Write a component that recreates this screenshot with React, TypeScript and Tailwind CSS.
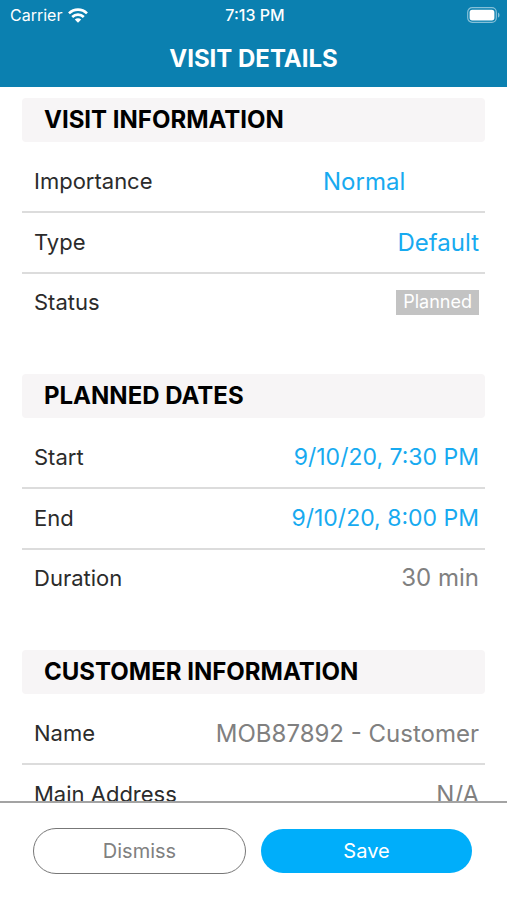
import { useState } from 'react';
import type { ReactNode } from 'react';

interface SectionProps {
  title: string;
  children: ReactNode;
}

interface RowProps {
  label: string;
  htmlFor?: string;
  last?: boolean;
  children: ReactNode;
}

function WifiIcon() {
  return (
    <svg width="20" height="15" viewBox="0 0 20 15" fill="none" stroke="white" strokeWidth="2.6" aria-hidden="true">
      <path d="M1 5.4C6 .4 14 .4 19 5.4" />
      <path d="M4.2 9C7.4 5.8 12.6 5.8 15.8 9" />
      <path d="M10 14.8 6.8 11.6C8.6 9.9 11.4 9.9 13.2 11.6Z" fill="white" stroke="none" />
    </svg>
  );
}

function BatteryIcon() {
  return (
    <svg width="33" height="16" viewBox="0 0 33 16" fill="none" aria-hidden="true">
      <rect x="0.7" y="0.7" width="28.6" height="14.6" rx="4.5" stroke="white" strokeOpacity="0.5" strokeWidth="1.2" />
      <rect x="2.6" y="2.8" width="24.8" height="10.6" rx="2.6" fill="white" />
      <path d="M31 5.4C33 6.3 33 9.7 31 10.6Z" fill="white" fillOpacity="0.5" />
    </svg>
  );
}

function Section({ title, children }: SectionProps) {
  return (
    <section className="mb-11">
      <h2 className="mb-2.5 flex h-11 items-center rounded-sm bg-[#f7f5f6] px-[22px] text-2xl font-bold text-black">
        {title}
      </h2>
      {children}
    </section>
  );
}

function Row({ label, htmlFor, last, children }: RowProps) {
  return (
    <div
      className={`flex items-center justify-between pr-1.5 pl-3 ${
        last ? 'h-14' : 'h-[61px] border-b-2 border-[#dcdcdc]'
      }`}
    >
      {htmlFor ? (
        <label htmlFor={htmlFor} className="text-[22px] text-[#2b2b2b]">{label}</label>
      ) : (
        <span className="text-[22px] text-[#2b2b2b]">{label}</span>
      )}
      {children}
    </div>
  );
}

export default function App() {
  const [importance, setImportance] = useState('Normal');

  return (
    <div className="flex h-screen flex-col bg-white font-['Inter',sans-serif]">
      <header className="shrink-0 bg-[#0b80b0] text-white">
        <div className="grid h-[30px] grid-cols-3 items-center pr-[7px] pl-2.5 text-base">
          <div className="flex items-center gap-1.5">
            <span>Carrier</span>
            <WifiIcon />
          </div>
          <span className="text-center font-medium">7:13 PM</span>
          <div className="flex justify-end">
            <BatteryIcon />
          </div>
        </div>
        <h1 className="flex h-[57px] items-center justify-center text-2xl font-bold">VISIT DETAILS</h1>
      </header>

      <main className="min-h-0 flex-1 overflow-y-auto px-[22px] pt-[11px] [scrollbar-width:none]">
        <Section title="VISIT INFORMATION">
          <Row label="Importance" htmlFor="importance">
            <select
              id="importance"
              value={importance}
              onChange={(e) => setImportance(e.target.value)}
              className="w-[156px] appearance-none bg-transparent text-2xl text-[#17aaf0]"
            >
              <option>Low</option>
              <option>Normal</option>
              <option>High</option>
            </select>
          </Row>
          <Row label="Type">
            <button type="button" className="text-2xl text-[#17aaf0]">Default</button>
          </Row>
          <Row label="Status" last>
            <span className="flex h-[25px] items-center bg-[#c3c3c3] px-[7px] text-lg text-white">Planned</span>
          </Row>
        </Section>

        <Section title="PLANNED DATES">
          <Row label="Start">
            <button type="button" className="text-[23px] text-[#17aaf0]">9/10/20, 7:30 PM</button>
          </Row>
          <Row label="End">
            <button type="button" className="text-[23px] text-[#17aaf0]">9/10/20, 8:00 PM</button>
          </Row>
          <Row label="Duration" last>
            <span className="text-2xl text-[#808080]">30 min</span>
          </Row>
        </Section>

        <Section title="CUSTOMER INFORMATION">
          <Row label="Name">
            <span className="text-2xl text-[#808080]">MOB87892 - Customer</span>
          </Row>
          <Row label="Main Address">
            <span className="text-2xl text-[#808080]">N/A</span>
          </Row>
        </Section>
      </main>

      <footer className="flex shrink-0 items-center gap-[15px] border-t-2 border-[#a3a3a3] bg-white pt-[25px] pr-[35px] pb-[26px] pl-[33px]">
        <button
          type="button"
          className="h-[46px] flex-1 rounded-full border border-[#777777] text-xl text-[#808080]"
        >
          Dismiss
        </button>
        <button type="button" className="h-11 flex-1 rounded-full bg-[#00aefa] text-xl text-white">
          Save
        </button>
      </footer>
    </div>
  );
}
